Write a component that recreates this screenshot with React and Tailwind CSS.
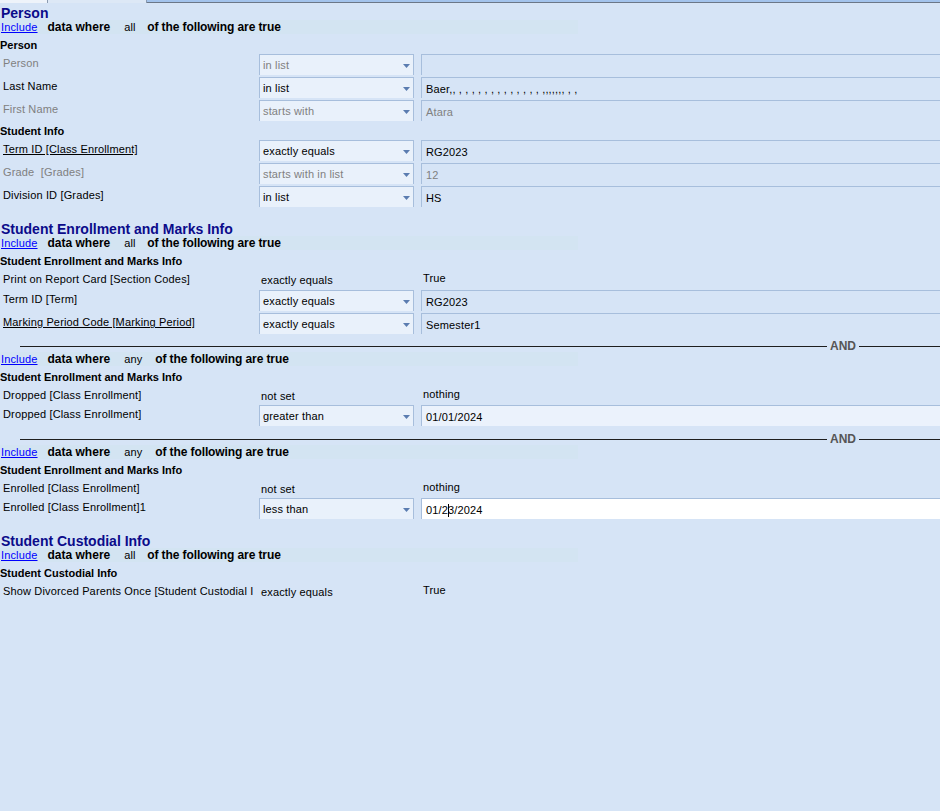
import React from "react";

const FONT = { fontFamily: '"Liberation Sans", Arial, sans-serif' };

function TopBar() {
  return (
    <div className="flex h-[5px]">
      <div className="w-[48px] h-[3px] bg-[#eef3fa] border-r border-[#8a9ab0]" />
      <div className="w-[99px] h-[3px] bg-[#dde8f6] border-r border-[#8a9ab0]" />
      <div className="flex-1 h-[3px] bg-[#a3c3ec] border-b border-[#6b7788]" />
    </div>
  );
}

function Title({ children, className = "" }) {
  return (
    <div className={`h-[15px] pt-[1px] leading-[15px] pl-[1px] text-[14px] font-bold text-[#0b0b8a] whitespace-nowrap ${className}`}>
      {children}
    </div>
  );
}

function IncludeLine({ mode }) {
  return (
    <div className="flex h-[14px] w-[578px] items-center bg-[#d3e4f2] whitespace-nowrap">
      <a href="#" className="pl-[1px] text-[11px] tracking-[0.15px] text-[#0000ff] underline">
        Include
      </a>
      <span className="ml-[10px] text-[12px] font-bold">data where</span>
      <span className={`ml-[14px] text-[11px] tracking-[0.15px] ${mode === "any" ? "w-[31px]" : "w-[23px]"}`}>{mode}</span>
      <span className="text-[12px] font-bold tracking-[-0.1px]">of the following are true</span>
    </div>
  );
}

function SubHeading({ children }) {
  return (
    <div className="mt-[4px] h-[14px] leading-[14px] text-[11px] font-bold whitespace-nowrap">
      {children}
    </div>
  );
}

function Arrow() {
  return (
    <svg width="7" height="4" viewBox="0 0 7 4">
      <path d="M0 0h7L3.5 4z" fill="#5a7cb0" />
    </svg>
  );
}

function BoxRow({ label, op, value, disabled, underline, valueBg = "", className = "" }) {
  const grey = disabled ? "text-[#808080]" : "text-black";
  return (
    <div className={`flex h-[21px] items-stretch text-[11px] tracking-[0.15px] ${className}`}>
      <div className={`w-[259px] pl-[3px] pr-[6px] pb-[2px] flex items-center whitespace-pre overflow-hidden ${grey}`}>
        <span className={underline ? "underline" : ""}>{label}</span>
      </div>
      <div className="w-[155px] flex items-center justify-between pl-[3px] pr-[3px] pt-[1px] border-t border-l border-r border-[#a7bedc] bg-[#e9f1fb]">
        <span className={grey}>{op}</span>
        <Arrow />
      </div>
      <div className={`ml-[7px] flex-1 flex items-center pl-[4px] pt-[2px] border-t border-l border-[#a7bedc] whitespace-pre ${valueBg} ${grey}`}>
        {value}
      </div>
    </div>
  );
}

function PlainRow({ label, op, value, className = "" }) {
  return (
    <div className={`flex h-[14px] items-center text-[11px] tracking-[0.15px] whitespace-nowrap ${className}`}>
      <div className="w-[259px] pl-[3px] pr-[8px] overflow-hidden">{label}</div>
      <div className="w-[162px] pl-[2px] pt-[2px]">{op}</div>
      <div className="pl-[2px] pb-[1px]">{value}</div>
    </div>
  );
}

function AndLine({ className = "" }) {
  return (
    <div className={`flex h-[12px] items-center ${className}`}>
      <div className="ml-[20px] flex-1 h-px bg-[#1e1e1e]" />
      <span className="px-[3px] text-[12px] leading-[12px] font-bold text-[#555555]">AND</span>
      <div className="w-[81px] h-px bg-[#1e1e1e]" />
    </div>
  );
}

export default function App() {
  return (
    <div style={FONT} className="w-[940px] h-[811px] overflow-hidden bg-[#d6e4f6] text-black">
      <TopBar />

      {/* Person */}
      <Title>Person</Title>
      <IncludeLine mode="all" />
      <SubHeading>Person</SubHeading>
      <div className="mt-[2px] flex flex-col gap-[2px]">
        <BoxRow label="Person" op="in list" value="" disabled />
        <BoxRow label="Last Name" op="in list" value="Baer,, , , , , , , , , , , , , , ,,,,,,, , ," />
        <BoxRow label="First Name" op="starts with" value="Atara" disabled />
      </div>
      <div className="mt-[3px] h-[14px] leading-[14px] text-[11px] font-bold">Student Info</div>
      <div className="mt-[2px] flex flex-col gap-[2px]">
        <BoxRow label="Term ID [Class Enrollment]" op="exactly equals" value="RG2023" underline />
        <BoxRow label="Grade  [Grades]" op="starts with in list" value="12" disabled />
        <BoxRow label="Division ID [Grades]" op="in list" value="HS" />
      </div>

      {/* Student Enrollment and Marks Info */}
      <Title className="mt-[14px]">Student Enrollment and Marks Info</Title>
      <IncludeLine mode="all" />
      <SubHeading>Student Enrollment and Marks Info</SubHeading>
      <PlainRow className="mt-[4px]" label="Print on Report Card [Section Codes]" op="exactly equals" value="True" />
      <div className="mt-[4px] flex flex-col gap-[2px]">
        <BoxRow label="Term ID [Term]" op="exactly equals" value="RG2023" />
        <BoxRow label="Marking Period Code [Marking Period]" op="exactly equals" value="Semester1" underline />
      </div>

      <AndLine className="mt-[6px]" />
      <IncludeLine mode="any" />
      <SubHeading>Student Enrollment and Marks Info</SubHeading>
      <PlainRow className="mt-[4px]" label="Dropped [Class Enrollment]" op="not set" value="nothing" />
      <BoxRow
        className="mt-[3px]"
        label="Dropped [Class Enrollment]"
        op="greater than"
        value="01/01/2024"
        valueBg="bg-[#ebf2fc]"
      />

      <AndLine className="mt-[7px]" />
      <IncludeLine mode="any" />
      <SubHeading>Student Enrollment and Marks Info</SubHeading>
      <PlainRow className="mt-[4px]" label="Enrolled [Class Enrollment]" op="not set" value="nothing" />
      <BoxRow
        className="mt-[3px]"
        label="Enrolled [Class Enrollment]1"
        op="less than"
        valueBg="bg-white"
        value={
          <span>
            01/2
            <span className="inline-block w-px h-[13px] -mr-px bg-black align-middle" />
            3/2024
          </span>
        }
      />

      {/* Student Custodial Info */}
      <Title className="mt-[14px]">Student Custodial Info</Title>
      <IncludeLine mode="all" />
      <SubHeading>Student Custodial Info</SubHeading>
      <PlainRow className="mt-[4px]" label="Show Divorced Parents Once [Student Custodial I" op="exactly equals" value="True" />
    </div>
  );
}
